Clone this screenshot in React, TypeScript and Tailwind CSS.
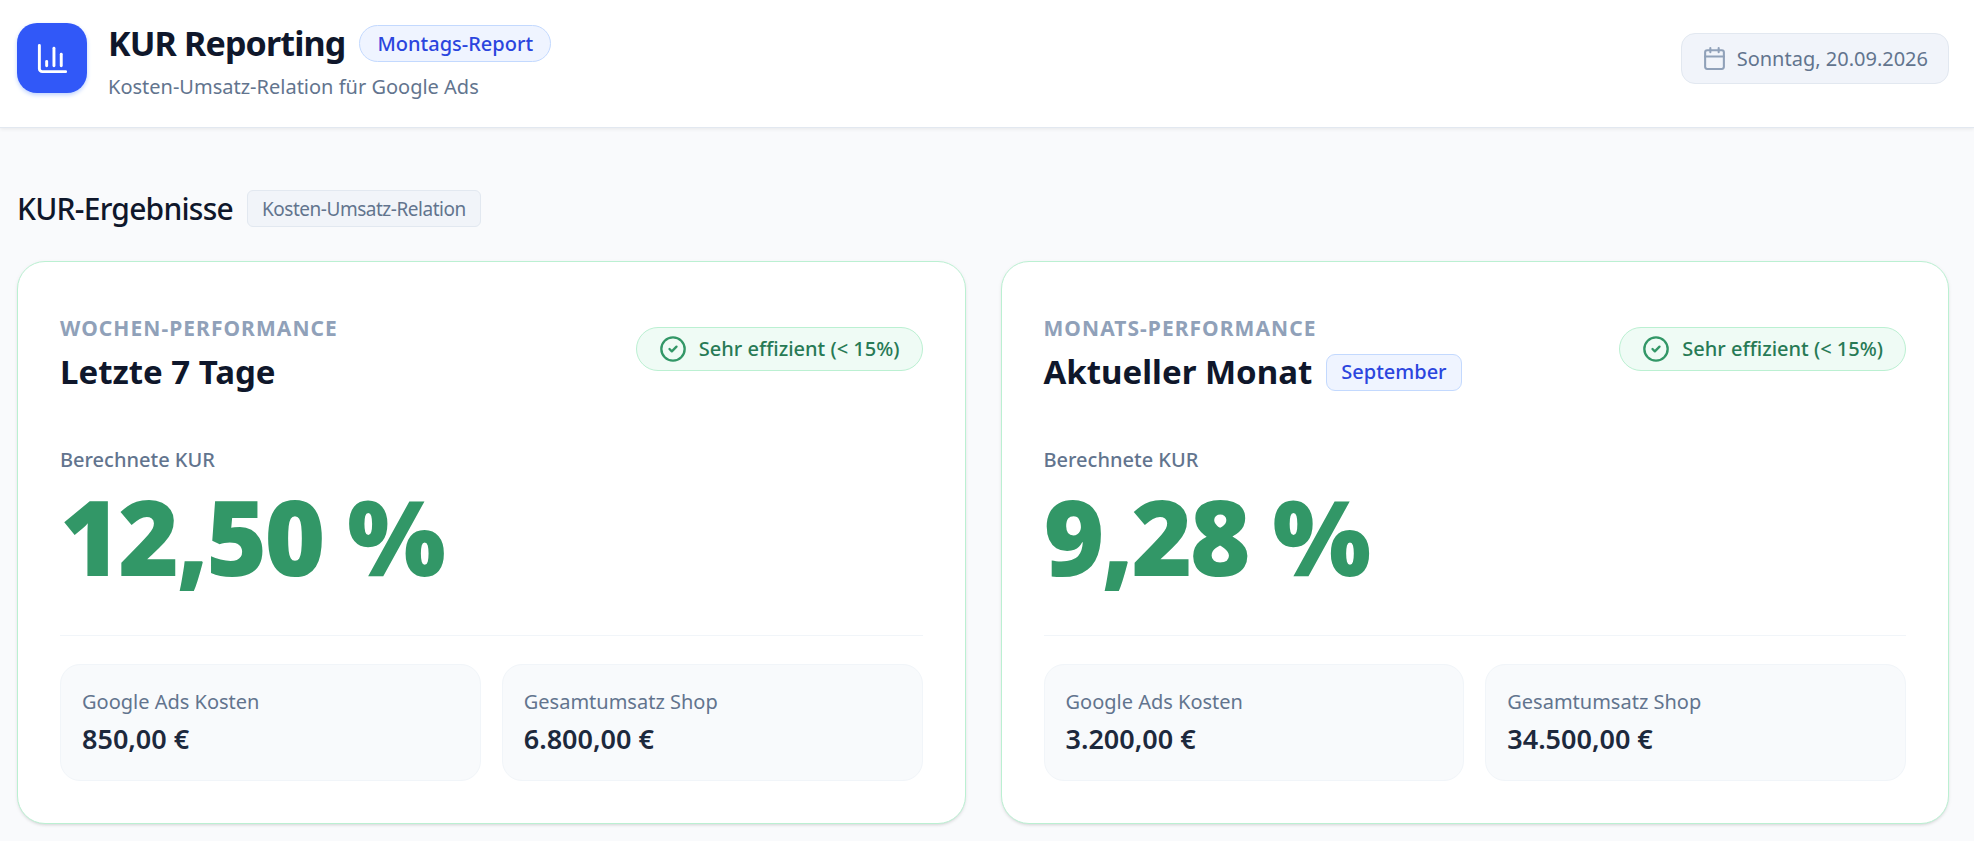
import { Calendar, ChartColumn, CircleCheck } from 'lucide-react';

interface Metric {
    label: string;
    value: string;
}

interface Performance {
    id: string;
    eyebrow: string;
    title: string;
    period?: string;
    status: string;
    kur: string;
    metrics: Metric[];
}

const performances: Performance[] = [
    {
        id: 'week',
        eyebrow: 'Wochen-Performance',
        title: 'Letzte 7 Tage',
        status: 'Sehr effizient (< 15%)',
        kur: '12,50 %',
        metrics: [
            { label: 'Google Ads Kosten', value: '850,00 €' },
            { label: 'Gesamtumsatz Shop', value: '6.800,00 €' },
        ],
    },
    {
        id: 'month',
        eyebrow: 'Monats-Performance',
        title: 'Aktueller Monat',
        period: 'September',
        status: 'Sehr effizient (< 15%)',
        kur: '9,28 %',
        metrics: [
            { label: 'Google Ads Kosten', value: '3.200,00 €' },
            { label: 'Gesamtumsatz Shop', value: '34.500,00 €' },
        ],
    },
];

function Header() {
    return (
        <header className="flex items-start justify-between border-b border-slate-200 bg-white pt-[23px] pr-[25px] pb-[25px] pl-[17px] shadow-[0_1px_4px_rgb(0_0_0/0.08)]">
            <div className="flex items-start gap-[21px]">
                <div className="flex size-[70px] items-center justify-center rounded-[20px] bg-[#3158f8] text-white shadow-[0_2px_4px_#bfd3fe]">
                    <ChartColumn size={35} />
                </div>
                <div>
                    <div className="flex h-10 items-center gap-[14px]">
                        <h1 className="text-[34px] leading-10 font-bold tracking-tight text-slate-900">KUR Reporting</h1>
                        <span className="flex h-[37px] items-center rounded-full border border-[#c3d9fe] bg-[#eff4ff] px-[17px] pt-0.5 text-[20px] font-medium text-[#2b45de]">
                            Montags-Report
                        </span>
                    </div>
                    <p className="mt-2 text-[20px] leading-[31px] text-slate-500">Kosten-Umsatz-Relation für Google Ads</p>
                </div>
            </div>
            <div className="mt-[10px] flex h-[51px] items-center gap-[10px] rounded-[14px] border border-slate-200 bg-[#f1f4fa] px-5 text-[20px] text-slate-500">
                <Calendar size={25} className="text-slate-400" />
                <span>Sonntag, 20.09.2026</span>
            </div>
        </header>
    );
}

function MetricBox({ label, value }: Metric) {
    return (
        <div className="rounded-[20px] border border-slate-100 bg-slate-50 px-[21px] py-[23px]">
            <dt className="text-[20px] leading-7 text-slate-500">{label}</dt>
            <dd className="mt-[5px] text-[27px] leading-9 font-semibold text-slate-800">{value}</dd>
        </div>
    );
}

function PerformanceCard({ eyebrow, title, period, status, kur, metrics }: Performance) {
    return (
        <article className="rounded-[28px] border border-[#bbf0d2] bg-white px-[42px] pt-[51px] pb-[42px] shadow-[0_1px_4px_rgb(0_0_0/0.06),0_2px_3px_-1px_rgb(0_0_0/0.1)]">
            <div className="flex items-start justify-between">
                <div>
                    <p className="text-[21px] leading-[30px] font-bold tracking-wider text-slate-400 uppercase">{eyebrow}</p>
                    <div className="mt-[10px] flex h-[38px] items-center gap-[14px]">
                        <h3 className="text-[33px] leading-10 font-bold text-slate-900">{title}</h3>
                        {period ? (
                            <span className="flex h-[37px] items-center rounded-[9px] border border-[#c3d9fe] bg-[#eff4ff] px-[14px] text-[20px] font-medium text-[#2b45de]">
                                {period}
                            </span>
                        ) : null}
                    </div>
                </div>
                <div className="mt-[14px] flex h-11 items-center gap-3 rounded-full border border-[#bbf0d2] bg-[#effbf5] px-[22px] text-[20px] font-medium text-[#277a55]">
                    <CircleCheck size={28} className="text-[#329767]" />
                    <span>{status}</span>
                </div>
            </div>
            <p className="mt-[54px] text-[20px] leading-[30px] font-medium text-slate-500">Berechnete KUR</p>
            <p className="mt-[9px] text-[104px] leading-none font-black tracking-tight text-[#329767]">{kur}</p>
            <dl className="mt-[47px] grid grid-cols-2 gap-[21px] border-t border-slate-100 pt-7">
                {metrics.map((metric) => (
                    <MetricBox key={metric.label} {...metric} />
                ))}
            </dl>
        </article>
    );
}

export default function App() {
    return (
        <div className="min-h-screen bg-[#f9fafc] font-['Noto_Sans','Open_Sans',sans-serif]">
            <Header />
            <main className="pt-[62px] pr-[25px] pb-[17px] pl-[17px]">
                <div className="flex h-[37px] items-center gap-[14px]">
                    <h2 className="text-[30px] leading-10 font-medium tracking-tight text-slate-900">KUR-Ergebnisse</h2>
                    <span className="flex h-full items-center rounded-[6px] border border-slate-200 bg-[#f1f4f9] px-[14px] pt-0.5 text-[19px] tracking-tight text-slate-500">
                        Kosten-Umsatz-Relation
                    </span>
                </div>
                <section className="mt-[34px] grid grid-cols-2 gap-[35px]">
                    {performances.map((performance) => (
                        <PerformanceCard key={performance.id} {...performance} />
                    ))}
                </section>
            </main>
        </div>
    );
}
